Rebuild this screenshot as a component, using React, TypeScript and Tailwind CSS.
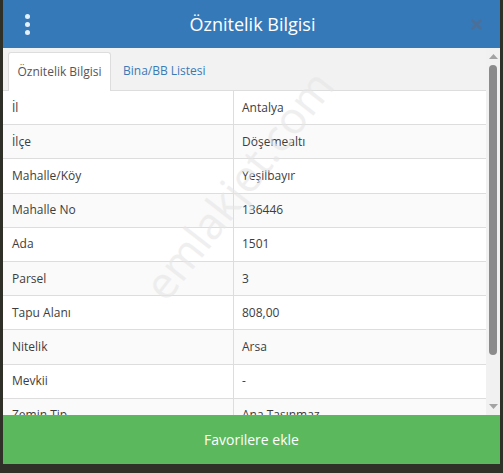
import React from "react";

const rows: [string, string][] = [
  ["İl", "Antalya"],
  ["İlçe", "Döşemealtı"],
  ["Mahalle/Köy", "Yeşilbayır"],
  ["Mahalle No", "136446"],
  ["Ada", "1501"],
  ["Parsel", "3"],
  ["Tapu Alanı", "808,00"],
  ["Nitelik", "Arsa"],
  ["Mevkii", "-"],
  ["Zemin Tip", "Ana Taşınmaz"],
];

function Kebab() {
  return (
    <div className="flex flex-col gap-[3px] items-center">
      <span className="w-[5px] h-[5px] rounded-full bg-[#e3f1ff]" />
      <span className="w-[5px] h-[5px] rounded-full bg-[#e3f1ff]" />
      <span className="w-[5px] h-[5px] rounded-full bg-[#e3f1ff]" />
    </div>
  );
}

function CloseIcon() {
  return (
    <svg width="11" height="11" viewBox="0 0 11 11" className="mr-[-4px]">
      <path d="M1.5 1.5 L9.5 9.5 M9.5 1.5 L1.5 9.5" stroke="#4d6f96" strokeWidth="2.6" strokeLinecap="round" />
    </svg>
  );
}

function Scrollbar() {
  return (
    <div className="w-[14px] shrink-0 bg-[#f1f1f1] flex flex-col items-center pt-[6px] pb-[6px]">
      <svg width="9" height="5" viewBox="0 0 9 5">
        <path d="M0 5 L4.5 0 L9 5 Z" fill="#a3a3a3" />
      </svg>
      <div className="mt-[6px] w-[8px] h-[290px] rounded-[4px] bg-[#8b8b8b]" />
      <div className="flex-1" />
      <svg width="9" height="5" viewBox="0 0 9 5">
        <path d="M0 0 L9 0 L4.5 5 Z" fill="#a3a3a3" />
      </svg>
    </div>
  );
}

export default function App() {
  return (
    <div
      className="w-[503px] h-[473px] bg-[#2f3128] px-[3px] overflow-hidden"
      style={{ fontFamily: '"Open Sans", "Noto Sans", sans-serif' }}
    >
      <div className="w-[497px] flex flex-col">
        {/* header */}
        <div className="h-[48px] bg-[#3679b8] flex items-center px-[22px] relative">
          <Kebab />
          <div className="flex-1 text-center text-white text-[18px] pl-[4px]">Öznitelik Bilgisi</div>
          <CloseIcon />
        </div>

        {/* body */}
        <div className="h-[367px] flex bg-[#f2f2f2] overflow-hidden">
          <div className="flex-1 flex flex-col relative overflow-hidden">
            <div className="flex items-end pl-[5px] pt-[4px] h-[43px] shrink-0 border-b border-[#dddddd]">
              <div className="h-[39px] w-[103px] bg-white border border-[#dddddd] border-b-0 rounded-t-[3px] mb-[-1px] flex items-center justify-center text-[12px] text-[#555555]">
                Öznitelik Bilgisi
              </div>
              <div className="h-[38px] flex items-center px-[12px] text-[12px] text-[#3a7ab5]">Bina/BB Listesi</div>
            </div>
            <div className="bg-white">
              {rows.map(([k, v], i) => (
                <div
                  key={k}
                  className={`flex h-[34.2px] border-b border-[#dddddd] text-[12px] text-[#3d3d3d] ${
                    i % 2 === 1 ? "bg-[#fafafa]" : "bg-white"
                  }`}
                >
                  <div className="w-[231px] border-r border-[#dddddd] flex items-center pl-[9px]">{k}</div>
                  <div className="flex-1 flex items-center pl-[8px]">{v}</div>
                </div>
              ))}
            </div>
            <div className="absolute left-[150px] top-[212px] text-[44px] text-[#e6e6e6] opacity-60 pointer-events-none origin-left -rotate-[52deg] whitespace-nowrap">
              emlakjet.com
            </div>
          </div>
          <Scrollbar />
        </div>

        {/* footer button */}
        <button className="h-[49px] bg-[#5cb85c] text-white text-[14px] flex items-center justify-center">
          Favorilere ekle
        </button>
      </div>
    </div>
  );
}
